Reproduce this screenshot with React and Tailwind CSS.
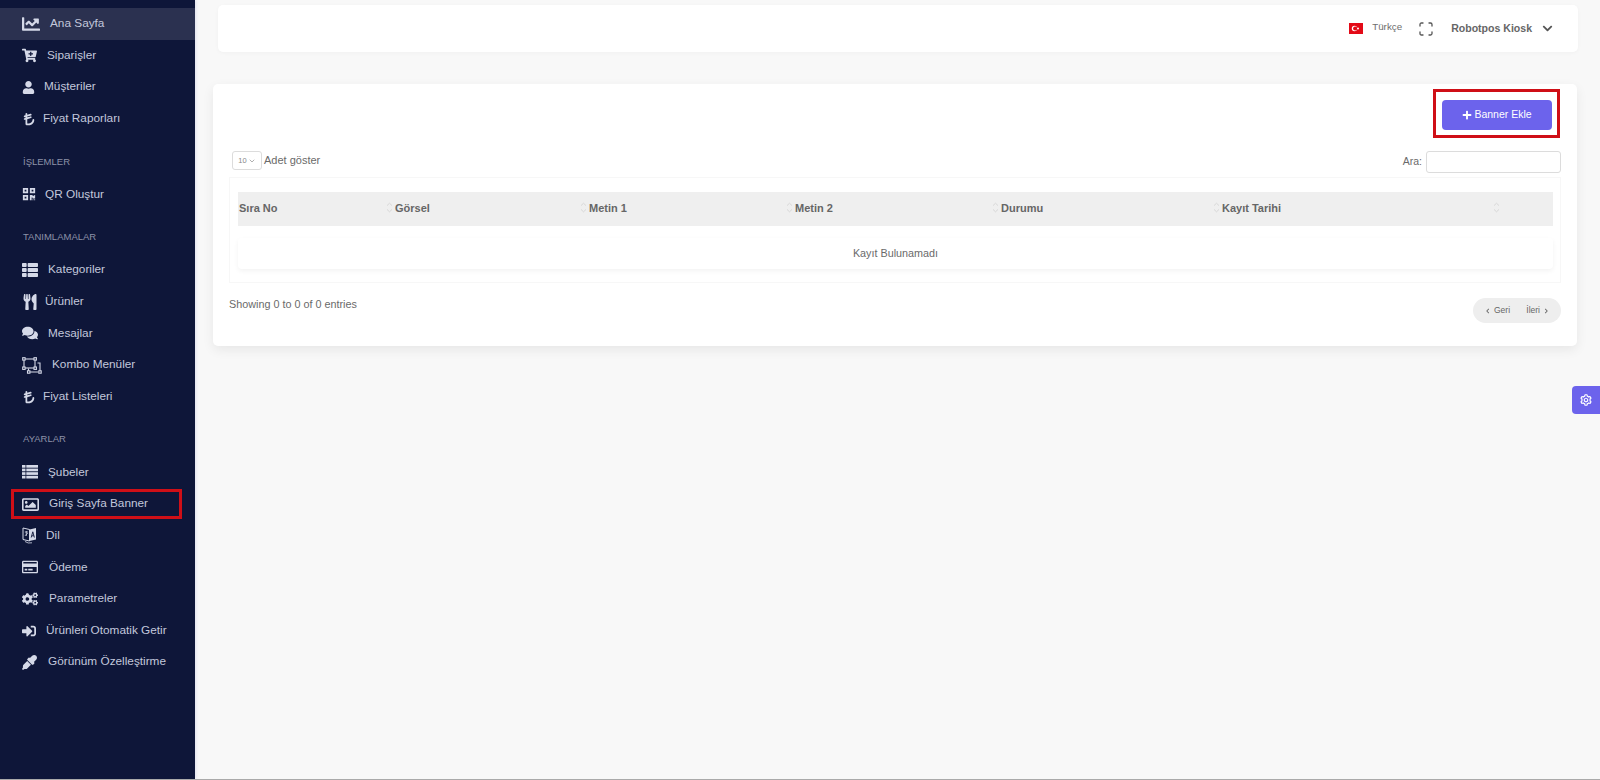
import React from "react";
import {
  FaChartLine,
  FaCartPlus,
  FaUser,
  FaQrcode,
  FaThList,
  FaUtensils,
  FaComments,
  FaRegImage,
  FaRegCreditCard,
  FaCogs,
  FaSignInAlt,
  FaEyeDropper,
  FaPlus,
  FaChevronDown,
} from "react-icons/fa";
import { FaTurkishLiraSign } from "react-icons/fa6";
import { BiChevronLeft, BiChevronRight, BiCog } from "react-icons/bi";
import { LuChevronDown } from "react-icons/lu";

const ComboIcon = ({ className }) => (
  <svg width="20" height="17" viewBox="0 0 20 17" fill="none" stroke="currentColor" strokeWidth="1.1" className={className}>
    <rect x="2" y="2" width="11" height="9" />
    <path d="M15.5 6 H18 V14 M16 15 H8 M6.5 11.5 V14" />
    <rect x="0.7" y="0.7" width="2.4" height="2.4" fill="#0e1639" />
    <rect x="12" y="0.7" width="2.4" height="2.4" fill="#0e1639" />
    <rect x="0.7" y="10" width="2.4" height="2.4" fill="#0e1639" />
    <rect x="12" y="10" width="2.4" height="2.4" fill="#0e1639" />
    <rect x="5.5" y="13.8" width="2.4" height="2.4" fill="#0e1639" />
    <rect x="16.8" y="13.8" width="2.4" height="2.4" fill="#0e1639" />
  </svg>
);

const RowsIcon = ({ className }) => (
  <svg width="16" height="14" viewBox="0 0 16 14" fill="currentColor" className={className}>
    {[0, 3.6, 7.2, 10.8].map((y) => (
      <g key={y}>
        <rect x="0" y={y} width="3.5" height="2.7" />
        <rect x="4.3" y={y} width="11.7" height="2.7" />
      </g>
    ))}
  </svg>
);

const BookIcon = ({ className }) => (
  <svg width="15" height="17" viewBox="0 0 15 17" className={className}>
    <path d="M7.5 2.5 L1 1 V12.5 L7.5 14 Z" fill="none" stroke="currentColor" strokeWidth="1" />
    <path d="M2.8 5 H6 M4.3 4 V9 M3 8.8 L5.8 6" fill="none" stroke="currentColor" strokeWidth="0.8" />
    <path d="M7.5 2.5 L14 1 V12.5 L7.5 14 Z" fill="currentColor" />
    <path d="M9.2 10.5 L10.8 4.8 L12.4 10.5 M9.8 8.8 H11.8" fill="none" stroke="#0e1639" strokeWidth="0.9" />
    <path d="M3 14.5 Q6 16.8 10 15.8" fill="none" stroke="currentColor" strokeWidth="0.8" />
  </svg>
);

const menu = [
  { type: "item", label: "Ana Sayfa", icon: FaChartLine, box: "w-[28px]", size: 18, active: true },
  { type: "item", label: "Siparişler", icon: FaCartPlus, box: "w-[25px]", size: 15 },
  { type: "item", label: "Müşteriler", icon: FaUser, box: "w-[22px]", size: 13 },
  { type: "item", label: "Fiyat Raporları", icon: FaTurkishLiraSign, box: "w-[21px]", size: 14 },
  { type: "title", label: "İŞLEMLER" },
  { type: "item", label: "QR Oluştur", icon: FaQrcode, box: "w-[23px]", size: 14 },
  { type: "title", label: "TANIMLAMALAR" },
  { type: "item", label: "Kategoriler", icon: FaThList, box: "w-[26px]", size: 16 },
  { type: "item", label: "Ürünler", icon: FaUtensils, box: "w-[23px]", size: 16 },
  { type: "item", label: "Mesajlar", icon: FaComments, box: "w-[26px]", size: 16 },
  { type: "item", label: "Kombo Menüler", icon: ComboIcon, box: "w-[30px]" },
  { type: "item", label: "Fiyat Listeleri", icon: FaTurkishLiraSign, box: "w-[21px]", size: 14 },
  { type: "title", label: "AYARLAR" },
  { type: "item", label: "Şubeler", icon: RowsIcon, box: "w-[26px]" },
  { type: "item", label: "Giriş Sayfa Banner", icon: FaRegImage, box: "w-[27px]", size: 17, marked: true },
  { type: "item", label: "Dil", icon: BookIcon, box: "w-[24px]" },
  { type: "item", label: "Ödeme", icon: FaRegCreditCard, box: "w-[27px]", size: 16 },
  { type: "item", label: "Parametreler", icon: FaCogs, box: "w-[27px]", size: 16 },
  { type: "item", label: "Ürünleri Otomatik Getir", icon: FaSignInAlt, box: "w-[24px]", size: 14 },
  { type: "item", label: "Görünüm Özelleştirme", icon: FaEyeDropper, box: "w-[26px]", size: 15 },
];

const columns = [
  { label: "Sıra No", cls: "w-[147px]", sort: false },
  { label: "Görsel", cls: "w-[194px]", sort: true },
  { label: "Metin 1", cls: "w-[206px]", sort: true },
  { label: "Metin 2", cls: "w-[206px]", sort: true },
  { label: "Durumu", cls: "w-[221px]", sort: true },
  { label: "Kayıt Tarihi", cls: "w-[280px]", sort: true },
  { label: "", cls: "w-[50px]", sort: true },
];

const SortIcon = () => (
  <svg width="7" height="11" viewBox="0 0 7 11" fill="none" stroke="#d4d4d4" strokeWidth="0.9" className="shrink-0 -mt-[2px]">
    <path d="M1 3.6 L3.5 1.2 L6 3.6" />
    <path d="M1 7.4 L3.5 9.8 L6 7.4" />
  </svg>
);

const Flag = () => (
  <svg width="14" height="11" viewBox="0 0 14 11" className="shrink-0">
    <rect width="14" height="11" fill="#e30a17" />
    <circle cx="5.5" cy="5.5" r="2.7" fill="#fff" />
    <circle cx="6.2" cy="5.5" r="2.1" fill="#e30a17" />
    <circle cx="9" cy="5.5" r="1" fill="#fff" />
  </svg>
);

const FullscreenIcon = () => (
  <svg width="14" height="14" viewBox="0 0 14 14" fill="none" stroke="#555" strokeWidth="1.3" strokeLinecap="round" className="shrink-0">
    <path d="M1 4 V2.5 Q1 1 2.5 1 H4" />
    <path d="M10 1 H11.5 Q13 1 13 2.5 V4" />
    <path d="M13 10 V11.5 Q13 13 11.5 13 H10" />
    <path d="M4 13 H2.5 Q1 13 1 11.5 V10" />
  </svg>
);

const Sidebar = () => (
  <aside className="w-[195px] shrink-0 bg-[#0e1639] pt-[8px] shadow-[1px_0_3px_#dfe0ee]">
    {menu.map((m) => {
      if (m.type === "title") {
        return (
          <div key={m.label} className="h-[44px] pt-[10px] pl-[23px] flex items-center text-[9.5px] text-[#8d92a8]">
            {m.label}
          </div>
        );
      }
      const Icon = m.icon;
      return (
        <div
          key={m.label}
          className={`relative h-[31.67px] pl-[22px] flex items-center text-[11.8px] text-[#c3c8dc] ${m.active ? "bg-[#2b3150]" : ""}`}
        >
          <span className={`${m.box} shrink-0 flex items-center`}>
            <Icon size={m.size} className="text-[#d5d9e8]" />
          </span>
          {m.label}
          {m.marked && (
            <span className="absolute left-[11px] right-[13px] top-[1px] bottom-[1px] border-[3px] border-[#cf0f17]" />
          )}
        </div>
      );
    })}
  </aside>
);

const Topbar = () => (
  <header className="h-[47px] ml-[5px] bg-white rounded-[5px] shadow-[0_1px_4px_rgba(0,0,0,0.03)] flex items-center justify-end pr-[25px]">
    <Flag />
    <span className="ml-[9px] text-[9.8px] text-[#6e6e6e] -mt-[3px]">Türkçe</span>
    <span className="ml-[17px]">
      <FullscreenIcon />
    </span>
    <span className="ml-[18px] text-[10.55px] font-bold text-[#666]">Robotpos Kiosk</span>
    <FaChevronDown size={11} className="ml-[10px] text-[#555]" />
  </header>
);

const BannerCard = () => (
  <section className="relative mt-[32px] mr-[1px] h-[262px] bg-white rounded-[5px] shadow-[0_4px_12px_rgba(0,0,0,0.07)] px-[16px]">
    <div className="h-[16px]" />
    <div className="flex justify-end pr-[9px]">
      <button className="relative w-[110px] h-[30px] bg-[#6c63ec] rounded-[4px] flex items-center justify-center gap-[2px] text-[10.5px] text-white">
        <FaPlus size={10} />
        Banner Ekle
        <span className="absolute -left-[9px] -right-[8px] -top-[11px] -bottom-[8px] border-[3px] border-[#cf0f17]" />
      </button>
    </div>

    <div className="mt-[21px] h-[22px] flex items-center justify-between">
      <div className="flex items-center pl-[3px] -mt-[3px] text-[11px] text-[#6a6a6a]">
        <span className="w-[30px] h-[19px] border border-[#dcdcdc] rounded-[3px] flex items-center justify-center gap-[1px] text-[7.5px] text-[#888]">
          10
          <LuChevronDown size={8} />
        </span>
        <span className="ml-[2px]">Adet göster</span>
      </div>
      <div className="flex items-center text-[10.5px] text-[#6a6a6a]">
        Ara:
        <span className="ml-[4px] w-[135px] h-[22px] border border-[#dcdcdc] rounded-[3px] bg-white" />
      </div>
    </div>

    <div className="mt-[4px] h-[106px] border border-[#f7f7f7] pl-[8px] pr-[7px] pt-[14px]">
      <div className="h-[34px] pb-[2px] bg-[#efefef] flex items-center text-[11px] font-bold text-[#666]">
        {columns.map((c, i) => (
          <div key={i} className={`${c.cls} shrink-0 flex items-center gap-[2px] pl-[1px]`}>
            {c.sort && <SortIcon />}
            {c.label}
          </div>
        ))}
      </div>
      <div className="mt-[12px] h-[31px] rounded-[4px] shadow-[0_2px_5px_rgba(0,0,0,0.05)] flex items-center justify-center text-[10.8px] text-[#6a6a6a]">
        Kayıt Bulunamadı
      </div>
    </div>

    <div className="mt-[13px] flex items-start justify-between">
      <span className="text-[10.8px] text-[#6a6a6a]">Showing 0 to 0 of 0 entries</span>
      <div className="mt-[2px] w-[88px] h-[25px] rounded-full bg-[#eeeeee] flex items-center justify-between px-[10px] text-[8.5px] text-[#666]">
        <span className="flex items-center gap-[1px]">
          <BiChevronLeft size={10} />
          Geri
        </span>
        <span className="flex items-center gap-[1px]">
          İleri
          <BiChevronRight size={10} />
        </span>
      </div>
    </div>
  </section>
);

export default function App() {
  return (
    <div className="relative h-[780px] overflow-hidden flex bg-[#f8f8f8] border-b border-[#aaaaaa] font-['Liberation_Sans',Arial,sans-serif]">
      <Sidebar />
      <main className="flex-1 min-w-0 pl-[18px] pr-[22px] pt-[5px]">
        <Topbar />
        <BannerCard />
      </main>
      <button className="absolute right-0 top-[386px] w-[28px] h-[28px] bg-[#6c63ec] rounded-l-[4px] flex items-center justify-center text-white">
        <BiCog size={14} />
      </button>
    </div>
  );
}
